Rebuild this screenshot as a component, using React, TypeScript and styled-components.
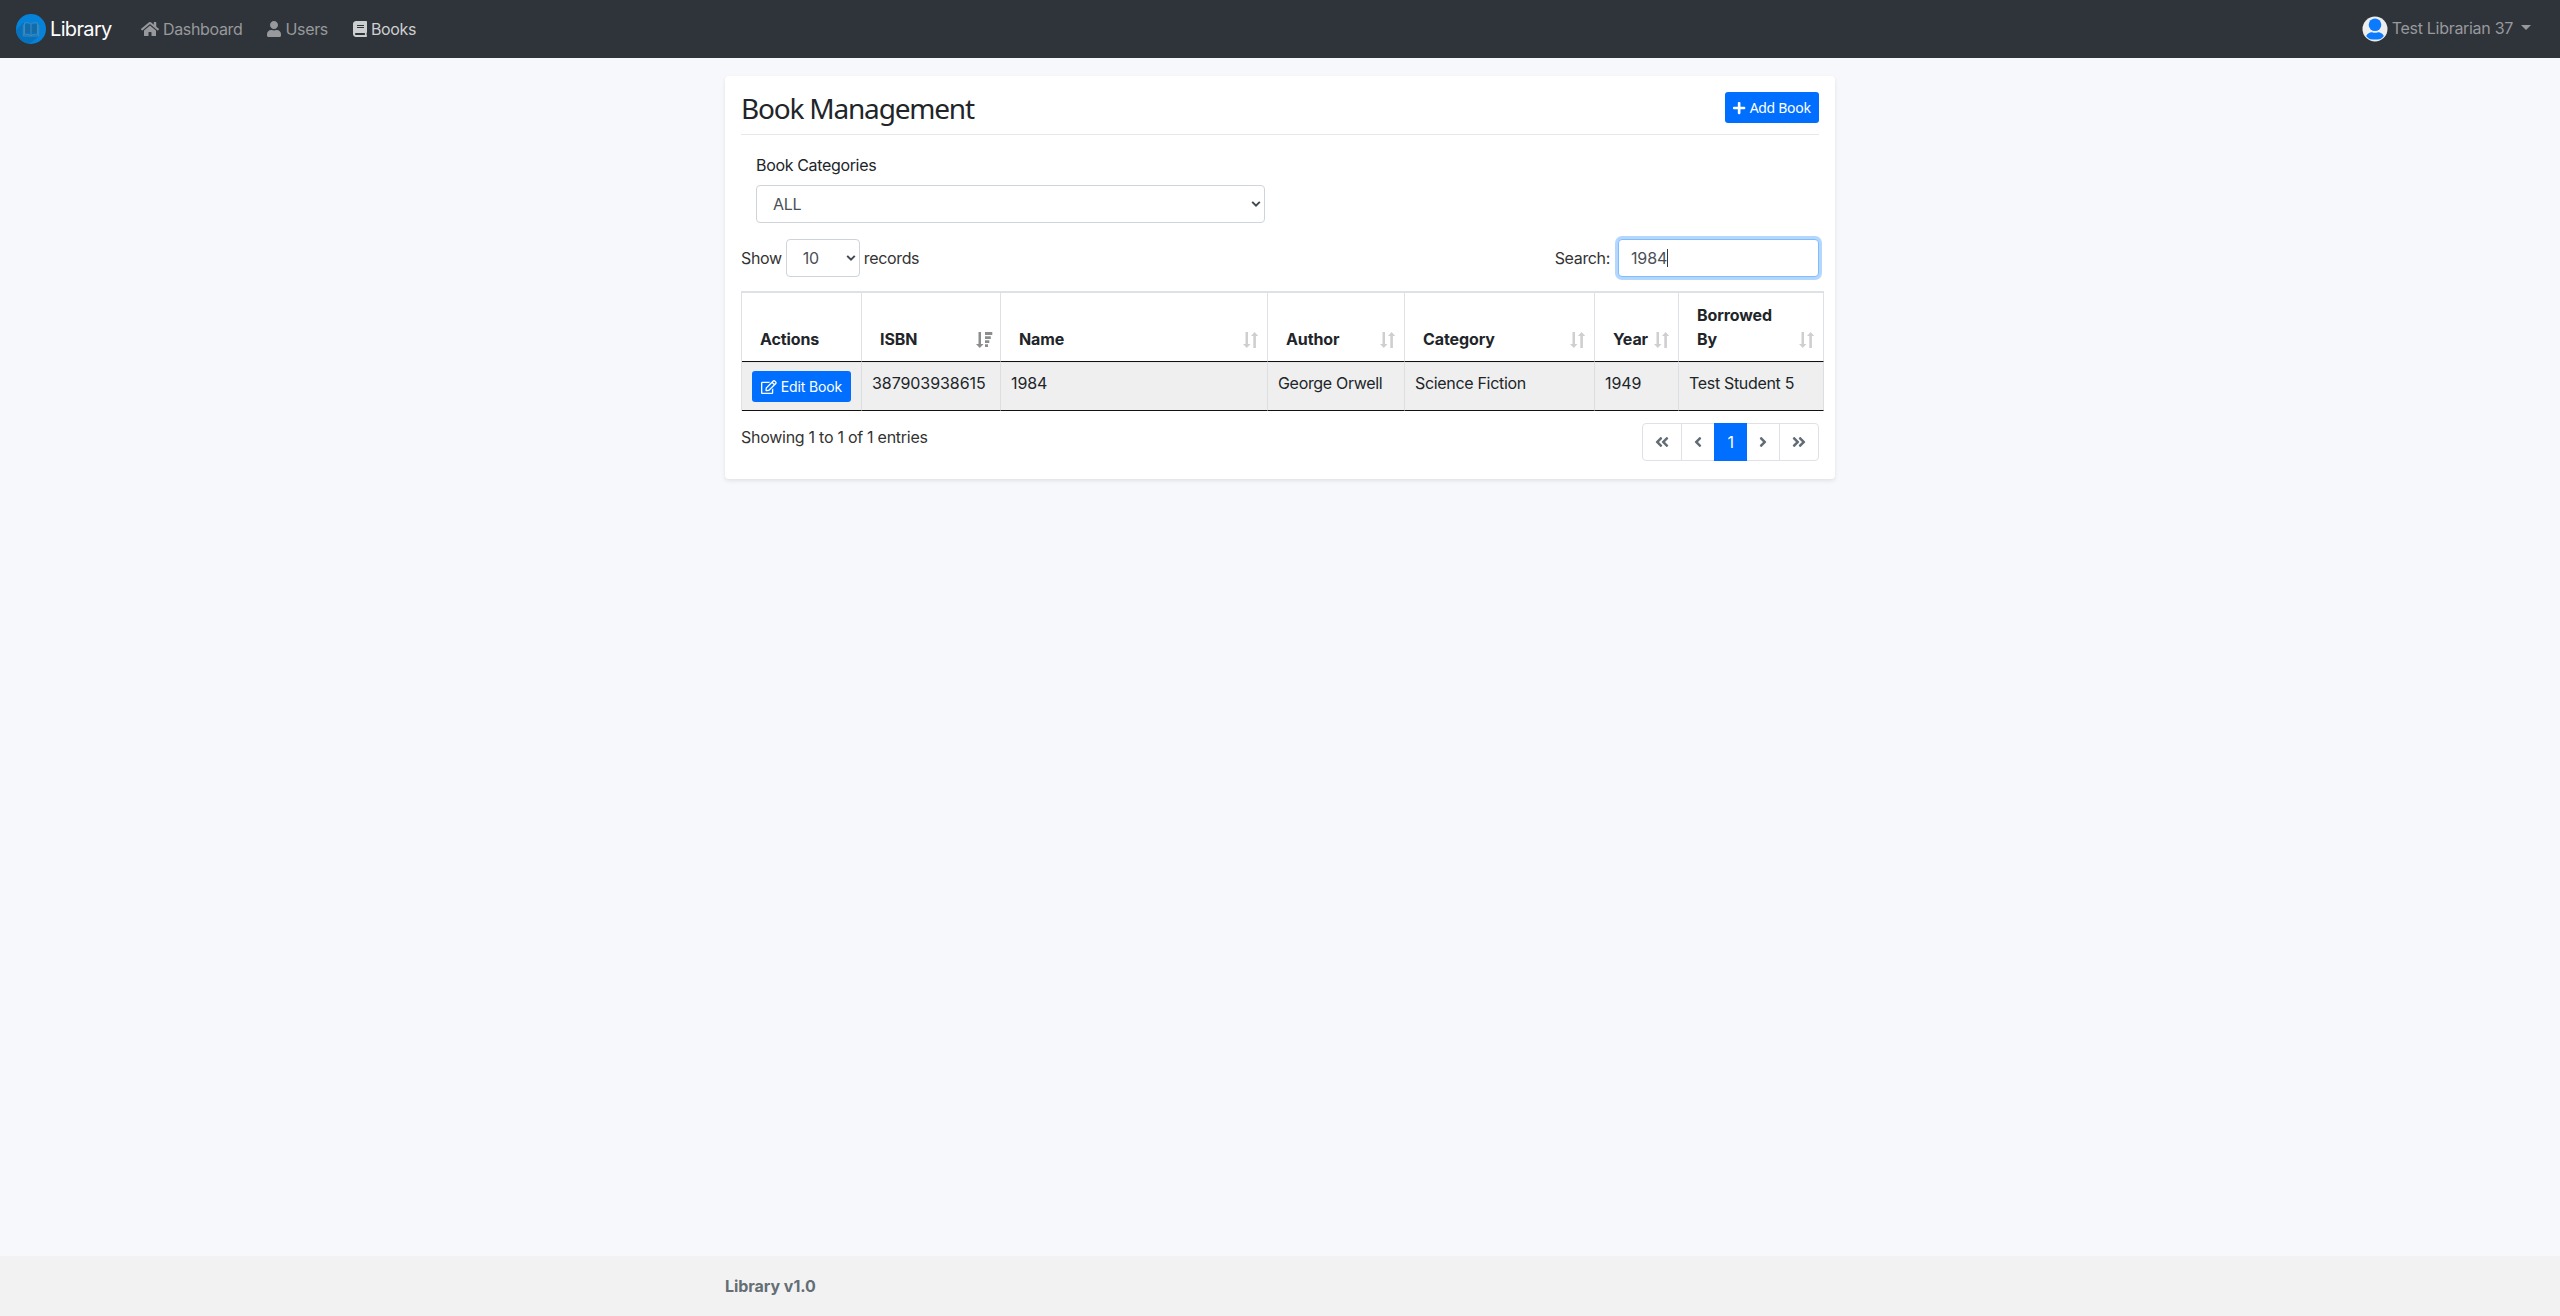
import React from 'react';
import styled, { createGlobalStyle } from 'styled-components';
import {
  FaAngleDoubleLeft,
  FaAngleDoubleRight,
  FaAngleLeft,
  FaAngleRight,
  FaBook,
  FaHome,
  FaPlus,
  FaRegEdit,
  FaUser,
} from 'react-icons/fa';

const GlobalStyle = createGlobalStyle`
  *, *::before, *::after { box-sizing: border-box; }
  body {
    margin: 0;
    background: #f7f8fb;
    color: #212529;
    font: 400 16px/24px Inter, "Liberation Sans", sans-serif;
    letter-spacing: -0.34px;
  }
`;

const Page = styled.div`
  display: flex;
  flex-direction: column;
  min-height: 100vh;
`;

const Icon = styled.span<{ $width: number; $height?: number }>`
  display: flex;
  flex: none;
  width: ${(p) => p.$width}px;
  height: ${(p) => p.$height ?? 16}px;

  svg {
    width: 100%;
    height: 100%;
  }
`;

const Navbar = styled.nav`
  display: flex;
  align-items: center;
  height: 58px;
  padding: 0 30px 0 16px;
  background: #2f343a;
`;

const Brand = styled.a`
  display: flex;
  align-items: center;
  gap: 4px;
  width: 125px;
  color: #fff;
  font-size: 20px;
  line-height: 30px;
  letter-spacing: -0.65px;
`;

const NavLinks = styled.div`
  display: flex;
  align-items: center;
  gap: 25px;
`;

const NavLink = styled.a<{ $active?: boolean }>`
  display: flex;
  align-items: center;
  gap: 4px;
  color: ${(p) => (p.$active ? '#cdced0' : '#97999c')};
`;

const UserMenu = styled.a`
  display: flex;
  align-items: center;
  gap: 4px;
  margin-left: auto;
  color: #97999c;
`;

const UserName = styled.span`
  padding-bottom: 2px;
  letter-spacing: -0.3px;
`;

const Caret = styled.span`
  margin: 0 -1px 3px 4px;
  border: 5px solid transparent;
  border-top-color: #97999c;
  border-bottom: 0;
`;

const Main = styled.main`
  flex: 1;
  width: 1110px;
  margin: 18px auto 0;
`;

const Card = styled.section`
  height: 403px;
  padding: 16px;
  border-radius: 4px;
  background: #fff;
  box-shadow: 0 2px 4px rgba(0, 0, 0, 0.09);
`;

const CardHeader = styled.header`
  display: flex;
  justify-content: space-between;
  align-items: flex-start;
  height: 43px;
  border-bottom: 1px solid #e6e7e8;
  font-family: 'Noto Sans', sans-serif;
`;

const Title = styled.h1`
  margin: 0;
  font-size: 28px;
  font-weight: 400;
  line-height: 33px;
  letter-spacing: -1.2px;
`;

const Button = styled.button<{ $width: number; $spacing: number }>`
  display: flex;
  align-items: center;
  justify-content: center;
  gap: 4px;
  width: ${(p) => p.$width}px;
  height: 31px;
  padding: 0;
  border: 0;
  border-radius: 3px;
  background: #006fff;
  color: #fff;
  font: inherit;
  font-size: 14px;
  line-height: 21px;
  letter-spacing: ${(p) => p.$spacing}px;
`;

const CategoryField = styled.div`
  display: flex;
  flex-direction: column;
  gap: 8px;
  width: 509px;
  margin: 18px 0 16px 15px;
`;

const Select = styled.div<{ $width: number }>`
  display: flex;
  align-items: center;
  justify-content: space-between;
  width: ${(p) => p.$width}px;
  height: 38px;
  padding: 0 3px 0 16px;
  border: 1px solid #ced4da;
  border-radius: 4px;
  background: #fff;
  color: #495057;
`;

const Controls = styled.div`
  display: flex;
  justify-content: space-between;
  align-items: center;
  margin-bottom: 14px;
  color: #333;
`;

const Inline = styled.label<{ $gap: number }>`
  display: flex;
  align-items: center;
  gap: ${(p) => p.$gap}px;
`;

const SearchBox = styled.div`
  display: flex;
  align-items: center;
  width: 201px;
  height: 38px;
  padding-left: 12px;
  border: 1px solid #80bdff;
  border-radius: 4px;
  background: #fff;
  box-shadow: 0 0 0 3px #b3d7ff;
  color: #495057;
  letter-spacing: -0.15px;
`;

const TextCursor = styled.span`
  width: 1px;
  height: 18px;
  background: #343a40;
`;

const Table = styled.table`
  width: 1083px;
  table-layout: fixed;
  border-collapse: separate;
  border-spacing: 0;
  border-top: 2px solid #dee2e6;
  border-left: 1px solid #dee2e6;
`;

const HeadCell = styled.th<{ $width: number }>`
  width: ${(p) => p.$width}px;
  height: 69px;
  padding: 10px 8px 10px 18px;
  border-right: 1px solid #dee2e6;
  border-bottom: 1px solid #111;
  text-align: left;
  vertical-align: bottom;
  font-weight: 700;
  letter-spacing: -0.1px;
`;

const HeadContent = styled.div`
  display: flex;
  align-items: flex-end;
  justify-content: space-between;

  svg {
    flex: none;
    margin-bottom: 3px;
  }
`;

const Cell = styled.td<{ $numeric?: boolean }>`
  height: 49px;
  padding: 8px 0 8px 10px;
  border-top: 1px solid #e3e7e9;
  border-right: 1px solid #dcdfe1;
  border-bottom: 1px solid #111;
  background: #efefef;
  vertical-align: top;
  letter-spacing: ${(p) => (p.$numeric ? '-0.07px' : '-0.32px')};
`;

const TableFooter = styled.div`
  display: flex;
  justify-content: space-between;
  align-items: flex-start;
  margin-top: 12px;
`;

const Info = styled.div`
  padding-top: 2px;
  color: #333;
  letter-spacing: -0.27px;
`;

const Pagination = styled.div`
  display: flex;
`;

const PageLink = styled.a<{ $active?: boolean }>`
  display: flex;
  align-items: center;
  justify-content: center;
  height: 38px;
  padding: 0 12px;
  border: 1px solid ${(p) => (p.$active ? '#006fff' : '#dee2e6')};
  background: ${(p) => (p.$active ? '#006fff' : '#fff')};
  color: ${(p) => (p.$active ? '#fff' : '#636c74')};
  ${(p) => p.$active && 'width: 33px; z-index: 1;'}

  & + & {
    margin-left: -1px;
  }
  &:first-child {
    border-radius: 4px 0 0 4px;
  }
  &:last-child {
    border-radius: 0 4px 4px 0;
  }
`;

const Footer = styled.footer`
  height: 60px;
  background: #f2f2f2;
`;

const FooterText = styled.div`
  width: 1110px;
  margin: 0 auto;
  color: #636e75;
  font-weight: 700;
  line-height: 60px;
  letter-spacing: -0.05px;
`;

const Logo = () => (
  <svg width="30" height="30" viewBox="0 0 30 30">
    <defs>
      <clipPath id="disc">
        <circle cx="15" cy="15" r="15" />
      </clipPath>
    </defs>
    <g clipPath="url(#disc)">
      <rect width="30" height="30" fill="#0682d8" />
      <path d="M7 9 L-4 20 L8 34 L22 23 L22.5 9.5Z" fill="#0672bd" />
    </g>
    <path
      d="M15 10C13 8.6 10 8.6 8.500 9V20.500C11 20 13 20.300 15 21.600C17 20.300 19 20 21.500 20.500V9C20 8.600 17 8.600 15 10ZM15 10V21.500M7.300 10.500V22H22.700V10.500"
      fill="none"
      stroke="#4a8bb8"
      strokeWidth="0.9"
    />
    <path
      d="M10 12h3.400M10 14.500h3.400M10 17h3.400M16.600 12H20M16.600 14.500H20M16.600 17H20"
      stroke="#2f5f83"
      strokeWidth="1"
    />
  </svg>
);

const Avatar = () => (
  <svg width="26" height="26" viewBox="0 0 26 26">
    <defs>
      <clipPath id="avatar">
        <circle cx="13" cy="13" r="11.300" />
      </clipPath>
    </defs>
    <circle cx="13" cy="13" r="12.500" fill="#ededed" />
    <g clipPath="url(#avatar)">
      <circle cx="13" cy="8.700" r="6.300" fill="#0a7aff" />
      <path d="M3.500 23.600C3.500 18.500 7 16.300 10 16.300C12 17 14 17 16 16.300C19 16.300 22.500 18.500 22.500 23.600Z" fill="#0a7aff" />
    </g>
  </svg>
);

const Chevron = () => (
  <svg width="10" height="8" viewBox="0 0 10 8">
    <path d="M1.200 1.900L5 5.600L8.800 1.900" fill="none" stroke="#41484f" strokeWidth="2" />
  </svg>
);

const SortIdleIcon = () => (
  <svg width="16" height="16" viewBox="0 0 16 16" fill="#cfcfcf">
    <path d="M2.500 0H5V12H7.500L3.750 16L0 12H2.500Z" />
    <path d="M10.300 16V4H8L11.600 0L15.200 4H12.900V16Z" />
  </svg>
);

const SortedGlyph = styled.svg`
  margin-right: -1px;
`;

const SortedIcon = () => (
  <SortedGlyph width="17" height="16" viewBox="0 0 17 16" fill="#8c8d8f">
    <path d="M2.500 0H5V12H7.500L3.750 16L0 12H2.500Z" />
    <path d="M9 0H16.300V3H9ZM9 4.200H14.800V7H9ZM9 8.300H13.300V11H9ZM9 12.300H12V15H9Z" />
  </SortedGlyph>
);

const columns: { label: React.ReactNode; width: number; sort?: React.ReactNode }[] = [
  { label: 'Actions', width: 120 },
  { label: 'ISBN', width: 139, sort: <SortedIcon /> },
  { label: 'Name', width: 267, sort: <SortIdleIcon /> },
  { label: 'Author', width: 137, sort: <SortIdleIcon /> },
  { label: 'Category', width: 190, sort: <SortIdleIcon /> },
  { label: 'Year', width: 84, sort: <SortIdleIcon /> },
  { label: <>Borrowed<br />By</>, width: 145, sort: <SortIdleIcon /> },
];

export default function App() {
  return (
    <Page>
      <GlobalStyle />
      <Navbar>
        <Brand>
          <Logo />
          Library
        </Brand>
        <NavLinks>
          <NavLink><Icon $width={18}><FaHome /></Icon>Dashboard</NavLink>
          <NavLink><Icon $width={14}><FaUser /></Icon>Users</NavLink>
          <NavLink $active><Icon $width={14}><FaBook /></Icon>Books</NavLink>
        </NavLinks>
        <UserMenu>
          <Avatar />
          <UserName>Test Librarian 37</UserName>
          <Caret />
        </UserMenu>
      </Navbar>
      <Main>
        <Card>
          <CardHeader>
            <Title>Book Management</Title>
            <Button $width={94} $spacing={-0.3}>
              <Icon $width={12.25} $height={14}><FaPlus /></Icon>Add Book
            </Button>
          </CardHeader>
          <CategoryField>
            <span>Book Categories</span>
            <Select $width={509}>ALL<Chevron /></Select>
          </CategoryField>
          <Controls>
            <Inline $gap={4}>
              Show
              <Select $width={74}>10<Chevron /></Select>
              records
            </Inline>
            <Inline $gap={8}>
              Search:
              <SearchBox>1984<TextCursor /></SearchBox>
            </Inline>
          </Controls>
          <Table>
            <thead>
              <tr>
                {columns.map((c, i) => (
                  <HeadCell key={i} $width={c.width}>
                    <HeadContent>
                      <span>{c.label}</span>
                      {c.sort}
                    </HeadContent>
                  </HeadCell>
                ))}
              </tr>
            </thead>
            <tbody>
              <tr>
                <Cell>
                  <Button $width={99} $spacing={-0.12}>
                    <Icon $width={15.75} $height={14}><FaRegEdit /></Icon>Edit Book
                  </Button>
                </Cell>
                <Cell $numeric>387903938615</Cell>
                <Cell $numeric>1984</Cell>
                <Cell>George Orwell</Cell>
                <Cell>Science Fiction</Cell>
                <Cell $numeric>1949</Cell>
                <Cell>Test Student 5</Cell>
              </tr>
            </tbody>
          </Table>
          <TableFooter>
            <Info>Showing 1 to 1 of 1 entries</Info>
            <Pagination>
              <PageLink><Icon $width={14}><FaAngleDoubleLeft /></Icon></PageLink>
              <PageLink><Icon $width={8}><FaAngleLeft /></Icon></PageLink>
              <PageLink $active>1</PageLink>
              <PageLink><Icon $width={8}><FaAngleRight /></Icon></PageLink>
              <PageLink><Icon $width={14}><FaAngleDoubleRight /></Icon></PageLink>
            </Pagination>
          </TableFooter>
        </Card>
      </Main>
      <Footer>
        <FooterText>Library v1.0</FooterText>
      </Footer>
    </Page>
  );
}
